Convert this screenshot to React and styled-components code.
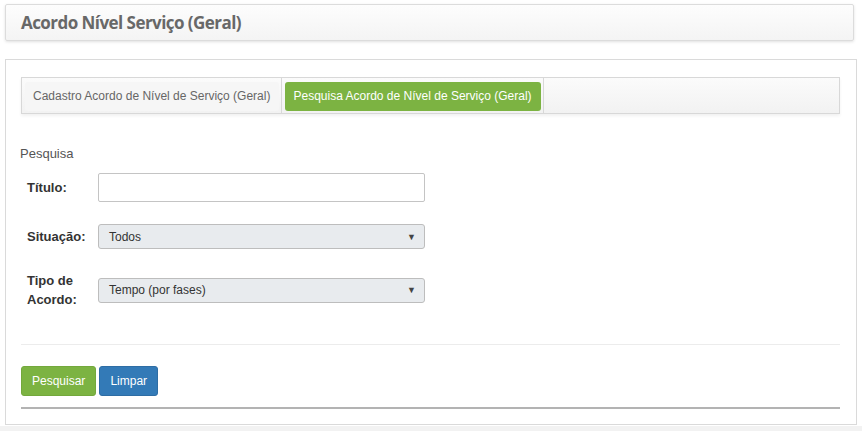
import React from "react"
import styled, { createGlobalStyle } from "styled-components"

const Global = createGlobalStyle`
  html, body {
    margin: 0;
    padding: 0;
    background: #f2f2f2;
    font-family: "Liberation Sans", Arial, sans-serif;
    font-size: 13px;
    color: #333;
  }
`

const Page = styled.div`
  background: #fff;
  padding: 4px 5px 1px 5px;
`

const Header = styled.div`
  width: 849px;
  height: 37px;
  box-sizing: border-box;
  border: 1px solid #dcdcdc;
  border-radius: 2px;
  background: linear-gradient(#fdfdfd, #f4f4f4);
  box-shadow: 0 1px 3px rgba(0, 0, 0, 0.12);
  display: flex;
  align-items: center;
  padding-left: 15px;
`

const Title = styled.h1`
  margin: 0;
  font-family: "Open Sans", sans-serif;
  font-weight: 700;
  font-size: 17px;
  letter-spacing: -0.55px;
  color: #686868;
`

const Panel = styled.div`
  margin-top: 18px;
  width: 852px;
  height: 366px;
  box-sizing: border-box;
  border: 1px solid #dadada;
  padding: 17px 16px 0 15px;
`

const TabBar = styled.ul`
  list-style: none;
  margin: 0;
  padding: 0;
  height: 37px;
  box-sizing: border-box;
  border: 1px solid #d8d8d8;
  background: linear-gradient(#fbfbfb, #f2f2f2);
  box-shadow: 0 2px 3px rgba(0, 0, 0, 0.06);
  display: flex;
`

const Tab = styled.li`
  border-right: 1px solid #d8d8d8;
  padding: 4px 2px 2px 3px;
`

const TabLink = styled.a`
  display: block;
  height: 29px;
  line-height: 29px;
  padding: 0 9px 0 8px;
  border-radius: 3px;
  cursor: pointer;
  font-size: 12px;
  color: ${(p) => (p.$active ? "#fff" : "#666")};
  background: ${(p) => (p.$active ? "#7cb342" : "#f6f6f6")};
`

const Section = styled.div`
  margin-top: 32px;
  margin-left: -1px;
  color: #555;
  line-height: 16px;
`

const Form = styled.div`
  margin-top: 11px;
  display: flex;
  flex-direction: column;
  gap: 22px;
`

const Row = styled.div`
  display: flex;
  align-items: center;
  padding-left: 6px;
`

const Label = styled.label`
  width: 71px;
  font-weight: 700;
  color: #333;
  line-height: 19px;
`

const TextInput = styled.input`
  width: 327px;
  height: 29px;
  box-sizing: border-box;
  border: 1px solid #c4c4c4;
  border-radius: 2px;
  background: #fff;
  outline: none;
`

const Select = styled.div`
  width: 327px;
  height: 25px;
  box-sizing: border-box;
  border: 1px solid #bdbdbd;
  border-radius: 3px;
  background: #e8ebee;
  display: flex;
  align-items: center;
  justify-content: space-between;
  padding: 0 8px 0 10px;
  font-size: 12px;
  color: #333;
`

const Caret = styled.span`
  font-size: 9px;
  color: #444;
`

const Divider = styled.hr`
  margin: 35px 0 0 0;
  border: 0;
  border-top: 1px solid #ececec;
`

const Actions = styled.div`
  margin-top: 21px;
  display: flex;
  gap: 3px;
`

const Button = styled.button`
  height: 30px;
  border: 1px solid ${(p) => (p.$primary ? "#73a83c" : "#2e6da4")};
  border-radius: 3px;
  background: ${(p) => (p.$primary ? "#7cb342" : "#337ab7")};
  color: #fff;
  font-family: "Liberation Sans", Arial, sans-serif;
  font-size: 12px;
  padding: 0 10px;
  cursor: pointer;
`

const Rule = styled.div`
  margin-top: 11px;
  height: 2px;
  background: #b3b3b3;
`

export default function App() {
  return (
    <>
      <Global />
      <Page>
        <Header>
          <Title>Acordo Nível Serviço (Geral)</Title>
        </Header>
        <Panel>
          <TabBar>
            <Tab>
              <TabLink>Cadastro Acordo de Nível de Serviço (Geral)</TabLink>
            </Tab>
            <Tab>
              <TabLink $active>Pesquisa Acordo de Nível de Serviço (Geral)</TabLink>
            </Tab>
          </TabBar>
          <Section>Pesquisa</Section>
          <Form>
            <Row>
              <Label>Título:</Label>
              <TextInput type="text" />
            </Row>
            <Row>
              <Label>Situação:</Label>
              <Select>
                Todos
                <Caret>▼</Caret>
              </Select>
            </Row>
            <Row>
              <Label>
                Tipo de
                <br />
                Acordo:
              </Label>
              <Select>
                Tempo (por fases)
                <Caret>▼</Caret>
              </Select>
            </Row>
          </Form>
          <Divider />
          <Actions>
            <Button $primary>Pesquisar</Button>
            <Button>Limpar</Button>
          </Actions>
          <Rule />
        </Panel>
      </Page>
    </>
  )
}
